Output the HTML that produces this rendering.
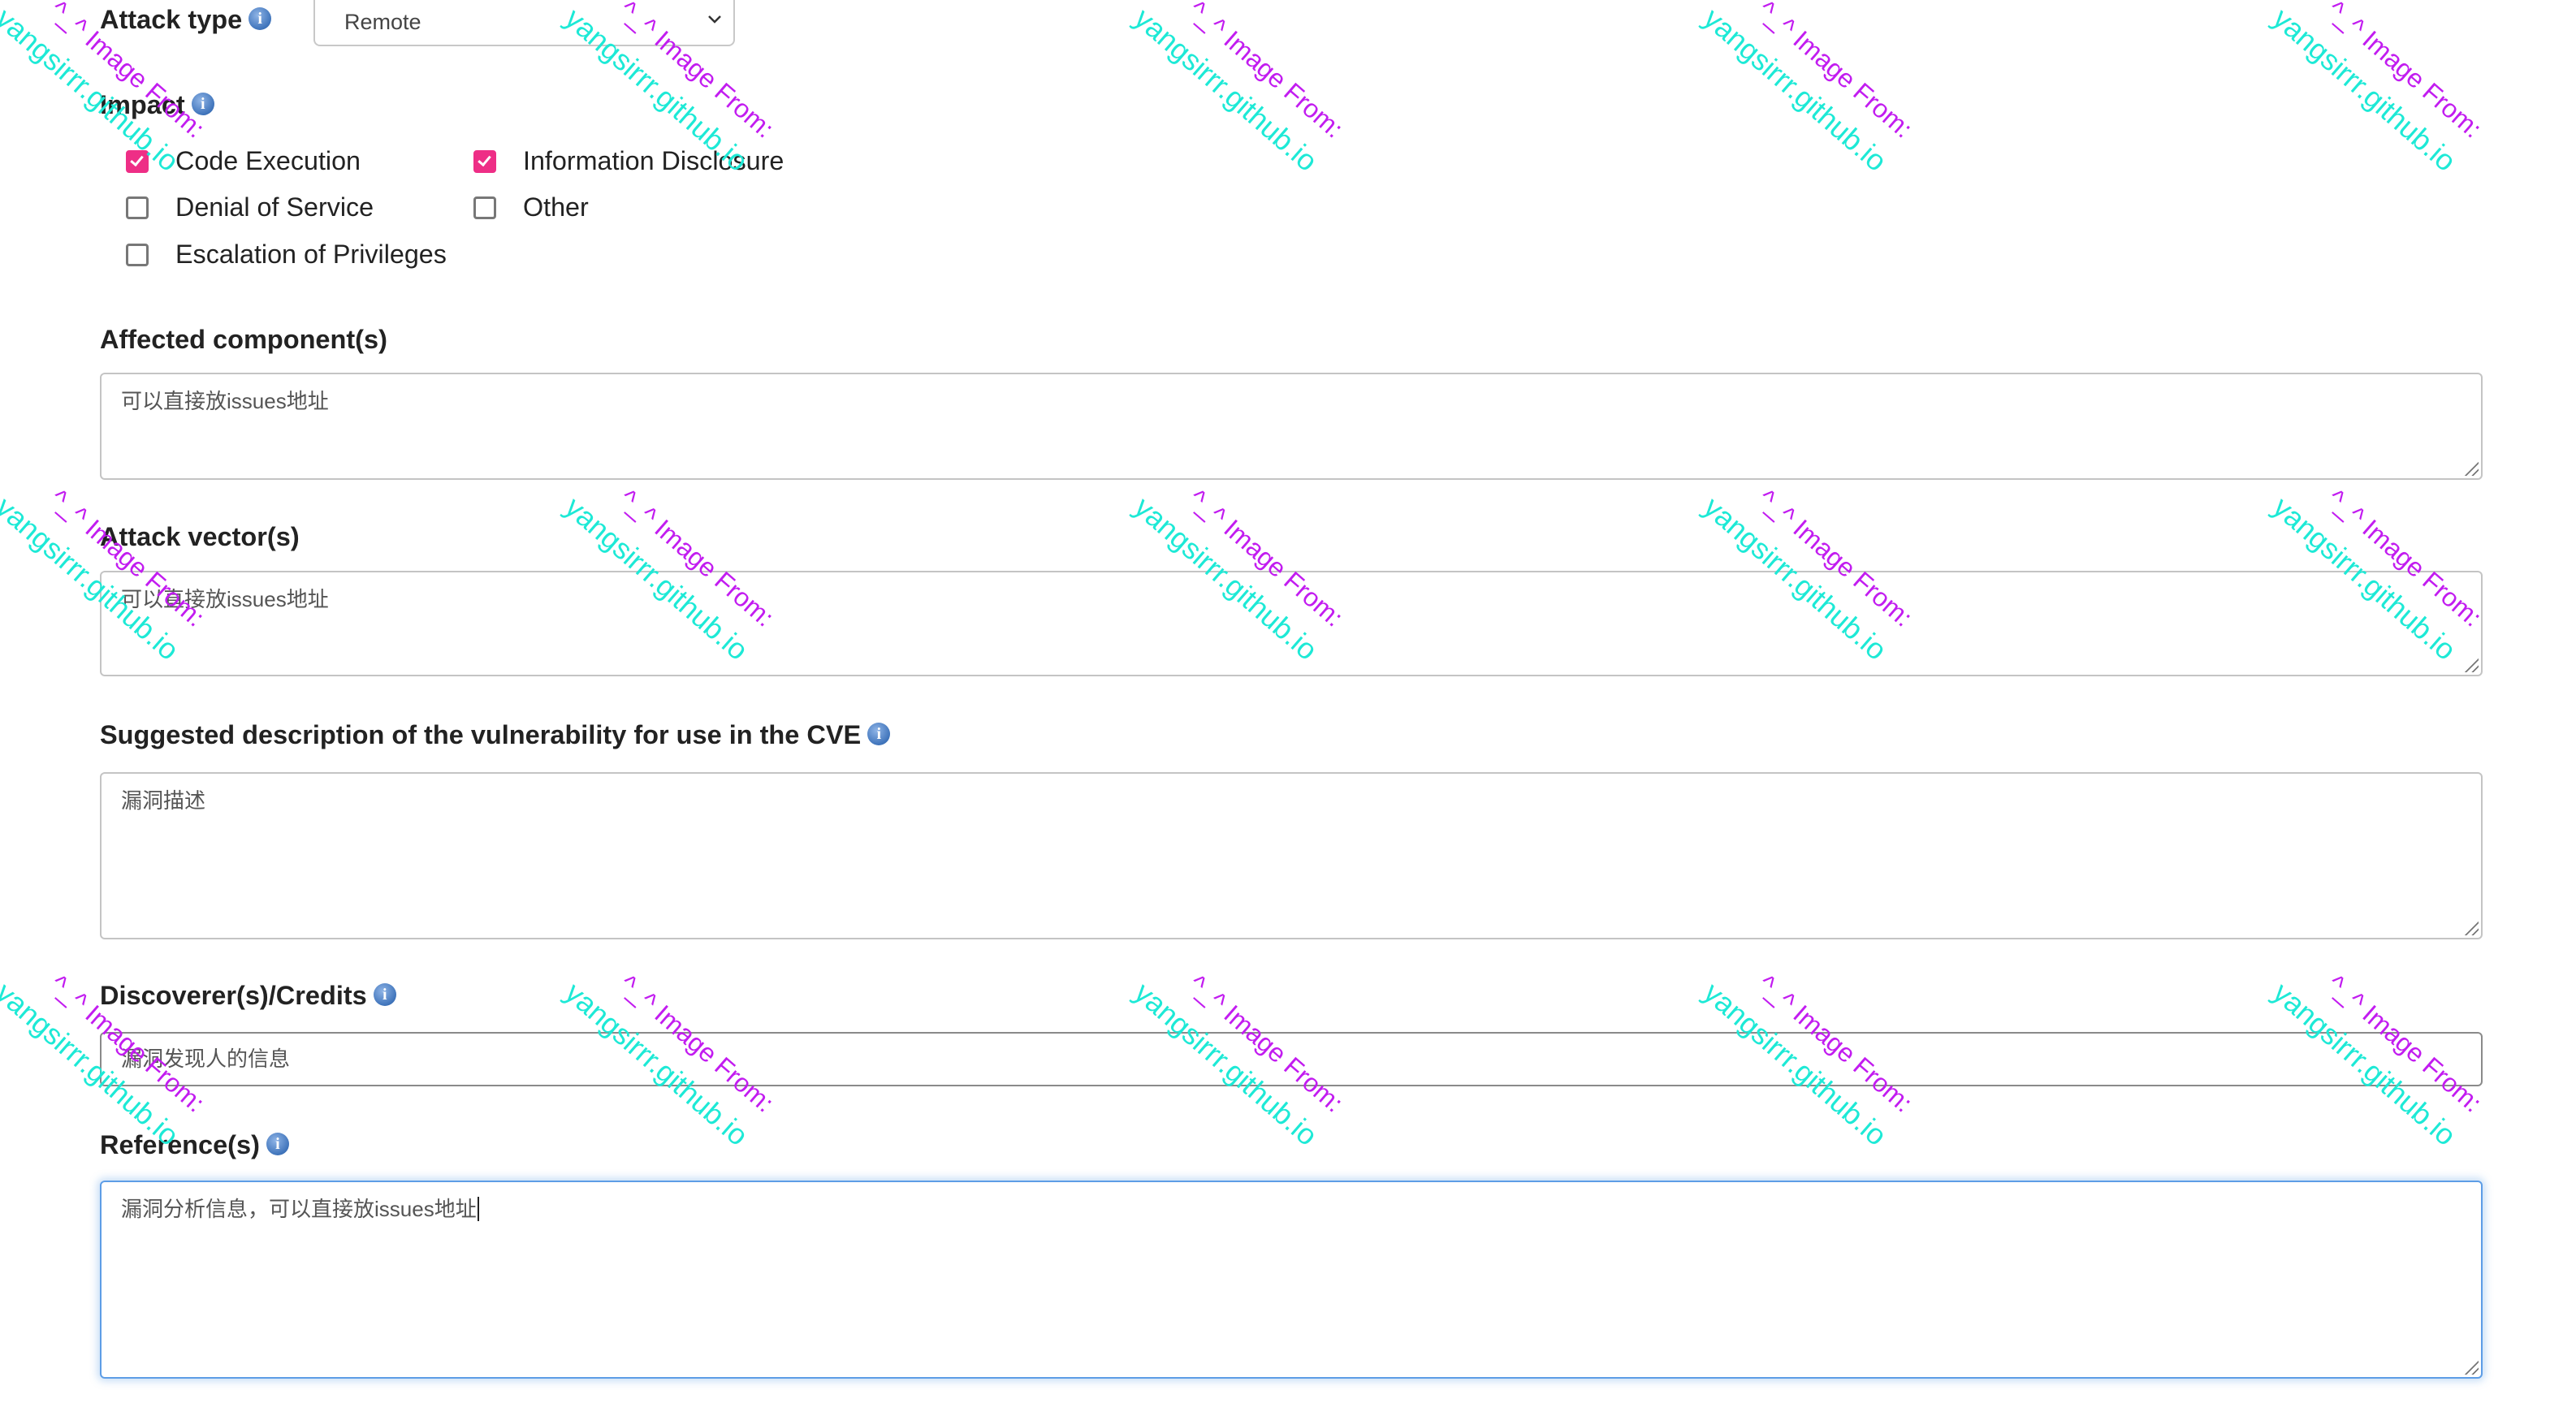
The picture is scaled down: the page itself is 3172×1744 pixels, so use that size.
<!DOCTYPE html>
<html><head><meta charset="utf-8">
<style>
html,body{margin:0;padding:0;background:#fff;}
body{width:3172px;height:1744px;position:relative;overflow:hidden;font-family:"Liberation Sans","Noto Sans CJK SC",sans-serif;color:#222;}
.lbl{position:absolute;left:123px;font-weight:bold;font-size:32.5px;line-height:40px;color:#222;white-space:nowrap;}
.info{display:inline-block;width:28px;height:28px;border-radius:50%;background:radial-gradient(circle at 40% 35%,#8fb4e6,#3f74bb 70%,#2f5c9c);color:#fff;font-size:20px;line-height:28px;text-align:center;vertical-align:middle;margin-left:8px;font-family:"Liberation Serif",serif;font-weight:bold;position:relative;top:-3px;}
.ta{position:absolute;left:123px;width:2934px;border:2px solid #c4c4c4;border-radius:6px;box-sizing:border-box;background:#fff;}
.ta .t{position:absolute;left:24px;top:16px;font-size:26px;color:#555;line-height:34px;white-space:nowrap;}
.grip{position:absolute;right:3px;bottom:3px;width:20px;height:20px;background:repeating-linear-gradient(135deg,transparent 0 4px,#777 4px 6px);clip-path:polygon(100% 0,100% 100%,0 100%);}
.cb{position:absolute;width:22px;height:22px;border:3px solid #777;border-radius:4px;background:#fff;}
.cb.on{background:#ee2e86;border-color:#ee2e86;}
.cb.on::after{content:"";position:absolute;left:6px;top:1px;width:6px;height:12px;border:solid #fff;border-width:0 3px 3px 0;transform:rotate(40deg);}
.ct{position:absolute;font-size:32.3px;line-height:40px;color:#222;white-space:nowrap;}
.wm{position:absolute;transform:rotate(41deg);transform-origin:0 0;white-space:nowrap;line-height:40px;}
.wm .p{color:#c21cf0;position:absolute;left:44px;top:4px;font-size:32px;}
.wm .c{color:#1de9d6;position:absolute;left:0;top:56px;font-size:36px;}
</style></head><body>

<div class="lbl" style="top:4px">Attack type<span class="info">i</span></div>
<div style="position:absolute;left:386px;top:-10px;width:519px;height:67px;border:2px solid #c8c8c8;border-radius:8px;box-sizing:border-box;">
 <span style="position:absolute;left:36px;top:20px;font-size:27px;color:#444;">Remote</span>
 <svg style="position:absolute;right:14px;top:26px" width="18" height="12" viewBox="0 0 18 12"><path d="M2 2 L9 9 L16 2" fill="none" stroke="#333" stroke-width="2.5"/></svg>
</div>

<div class="lbl" style="top:109px">Impact<span class="info">i</span></div>

<div class="cb on" style="left:155px;top:185px"></div><div class="ct" style="left:216px;top:178px">Code Execution</div>
<div class="cb on" style="left:583px;top:185px"></div><div class="ct" style="left:644px;top:178px">Information Disclosure</div>
<div class="cb" style="left:155px;top:242px"></div><div class="ct" style="left:216px;top:235px">Denial of Service</div>
<div class="cb" style="left:583px;top:242px"></div><div class="ct" style="left:644px;top:235px">Other</div>
<div class="cb" style="left:155px;top:300px"></div><div class="ct" style="left:216px;top:293px">Escalation of Privileges</div>

<div class="lbl" style="top:398px">Affected component(s)</div>
<div class="ta" style="top:459px;height:132px"><span class="t">可以直接放issues地址</span><div class="grip"></div></div>

<div class="lbl" style="top:641px">Attack vector(s)</div>
<div class="ta" style="top:703px;height:130px"><span class="t">可以直接放issues地址</span><div class="grip"></div></div>

<div class="lbl" style="top:885px">Suggested description of the vulnerability for use in the CVE<span class="info">i</span></div>
<div class="ta" style="top:951px;height:206px"><span class="t">漏洞描述</span><div class="grip"></div></div>

<div class="lbl" style="top:1206px">Discoverer(s)/Credits<span class="info">i</span></div>
<div class="ta" style="top:1271px;height:67px;border-color:#8a8a8a"><span class="t" style="top:14px">漏洞发现人的信息</span></div>

<div class="lbl" style="top:1390px">Reference(s)<span class="info">i</span></div>
<div class="ta" style="top:1454px;height:244px;border-color:#5d9de6;box-shadow:0 0 10px 3px rgba(93,157,230,0.35)"><span class="t">漏洞分析信息，可以直接放issues地址<span style="border-left:2px solid #222;margin-left:1px"></span></span><div class="grip"></div></div>

<!-- watermarks -->
<div class="wm" style="left:50px;top:-40px"><span class="p">^_^ Image From:</span><span class="c">yangsirrr.github.io</span></div>
<div class="wm" style="left:751px;top:-40px"><span class="p">^_^ Image From:</span><span class="c">yangsirrr.github.io</span></div>
<div class="wm" style="left:1452px;top:-40px"><span class="p">^_^ Image From:</span><span class="c">yangsirrr.github.io</span></div>
<div class="wm" style="left:2153px;top:-40px"><span class="p">^_^ Image From:</span><span class="c">yangsirrr.github.io</span></div>
<div class="wm" style="left:2854px;top:-40px"><span class="p">^_^ Image From:</span><span class="c">yangsirrr.github.io</span></div>

<div class="wm" style="left:50px;top:562px"><span class="p">^_^ Image From:</span><span class="c">yangsirrr.github.io</span></div>
<div class="wm" style="left:751px;top:562px"><span class="p">^_^ Image From:</span><span class="c">yangsirrr.github.io</span></div>
<div class="wm" style="left:1452px;top:562px"><span class="p">^_^ Image From:</span><span class="c">yangsirrr.github.io</span></div>
<div class="wm" style="left:2153px;top:562px"><span class="p">^_^ Image From:</span><span class="c">yangsirrr.github.io</span></div>
<div class="wm" style="left:2854px;top:562px"><span class="p">^_^ Image From:</span><span class="c">yangsirrr.github.io</span></div>

<div class="wm" style="left:50px;top:1160px"><span class="p">^_^ Image From:</span><span class="c">yangsirrr.github.io</span></div>
<div class="wm" style="left:751px;top:1160px"><span class="p">^_^ Image From:</span><span class="c">yangsirrr.github.io</span></div>
<div class="wm" style="left:1452px;top:1160px"><span class="p">^_^ Image From:</span><span class="c">yangsirrr.github.io</span></div>
<div class="wm" style="left:2153px;top:1160px"><span class="p">^_^ Image From:</span><span class="c">yangsirrr.github.io</span></div>
<div class="wm" style="left:2854px;top:1160px"><span class="p">^_^ Image From:</span><span class="c">yangsirrr.github.io</span></div>

</body></html>
